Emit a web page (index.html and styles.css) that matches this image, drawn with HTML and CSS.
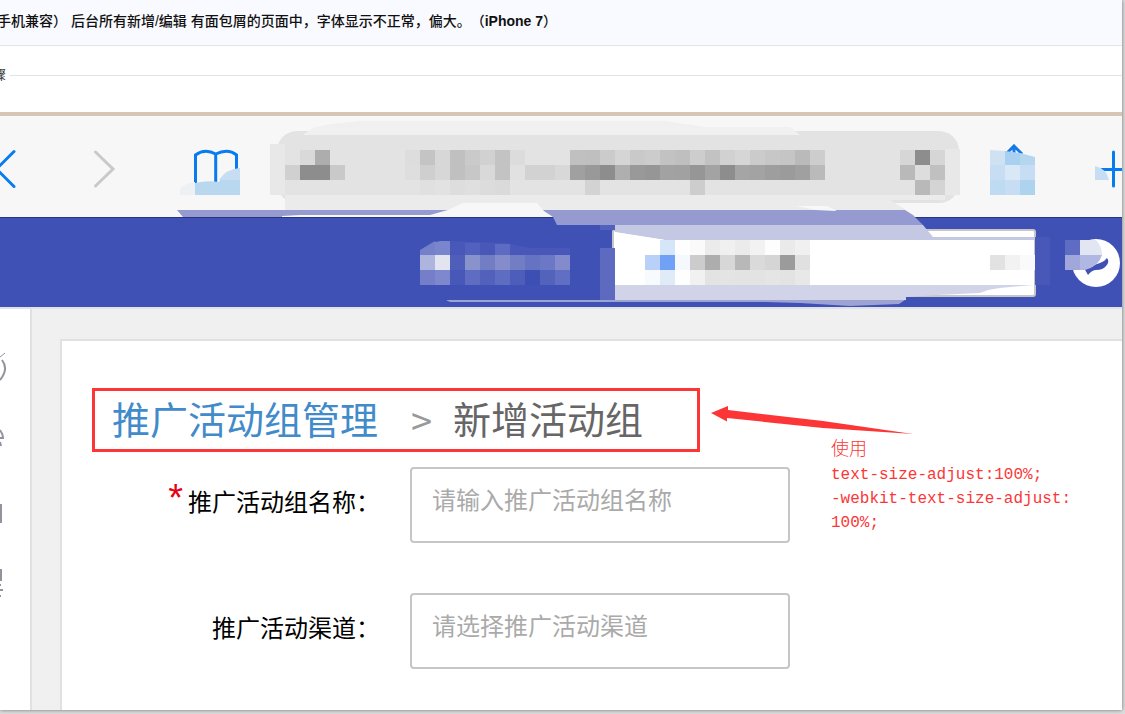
FILE: index.html
```html
<!DOCTYPE html>
<html lang="zh-CN">
<head>
<meta charset="utf-8">
<title>后台所有新增/编辑</title>
<link rel="stylesheet" href="styles.css">
</head>
<body>
<main class="sheet">
  <h1 class="issue-title">手机兼容） 后台所有新增/编辑 有面包屑的页面中，字体显示不正常，偏大。（<strong>iPhone 7</strong>）</h1>
  <div class="legend"><span class="legend-text">骤</span><span class="legend-line"></span></div>

  <section class="phone">
    <div class="toolbar">
      <button class="icon-button" aria-label="后退"><svg width="16" height="40" viewBox="0 0 16 40"><path d="M14 2.500-3.500 20 14 37.500" fill="none" stroke="#077bf0" stroke-width="3" stroke-linecap="round"/></svg></button>
      <button class="icon-button" aria-label="前进"><svg width="23" height="40" viewBox="0 0 23 40"><path d="M2.500 3 20 20 2.500 37" fill="none" stroke="#c9c9c9" stroke-width="3" stroke-linecap="round"/></svg></button>
      <button class="icon-button" aria-label="书签"><svg width="46" height="40" viewBox="0 0 46 40"><path d="M2.500 36V6Q12-1 22.700 5Q35-1 43.500 6V36M22.700 5V36" fill="none" stroke="#077bf0" stroke-width="3"/></svg></button>
      <input class="address" type="text" aria-label="地址">
      <button class="icon-button" aria-label="分享"><svg width="20" height="50" viewBox="0 0 20 50"><path d="M2 10 10 2 18 10M10 2V30" fill="none" stroke="#147ae8" stroke-width="3"/></svg></button>
      <button class="icon-button" aria-label="新建"><svg width="21" height="40" viewBox="0 0 21 40"><path d="M1 20.500H21M12.500 3V37" fill="none" stroke="#077bf0" stroke-width="3" stroke-linecap="round"/></svg></button>
    </div>
    <div class="app-bar">
      <input class="search" type="text" aria-label="搜索">
      <button class="icon-button" aria-label="用户"><svg width="48" height="48" viewBox="0 0 48 48"><circle cx="24" cy="24" r="24" fill="#fff"/><path d="M12 29 16 36Q20 31 24 31Q31 31 34 27Q38 23 35 19Q32 23 28 24Q23 25 20 28Z" fill="#3f51b5"/></svg></button>
    </div>
    <svg class="mosaic" width="1122" height="192" viewBox="0 116 1122 192" aria-hidden="true">
      <path fill="#f0f0f0" d="M303 135 313 128 330 124 360 121H665L705 127H790L800 135Z"/>
      <path fill="#ebebeb" d="M285 195H945V200H890L906 210H285Z"/>
      <path fill="#e8e8e8" d="M270 144H285V195H270ZM945 149H960V195H945Z"/>
      <path fill="#edf1f4" d="M180 195V189Q187 182 195 182V195Z"/>
      <path fill="#b9d8f0" d="M195 183Q207 180 219 182Q225 170 240 168V195H195Z"/>
      <path fill="#c6ddf3" d="M219 180Q226 169 240 168V180ZM1095 166Q1106 168 1109 180H1095Z"/>
      <path fill="#cfe2f2" d="M990 150 1005 151V165H990Z"/>
      <path fill="#a9d0f0" d="M1005 151 1020 153V165H1005Z"/>
      <path fill="#b5d6ef" d="M1020 153 1035 157V165H1020Z"/>
      <path fill="#959bd1" d="M177 210H905L913 215 923 225H557L553 217H183Z"/>
      <path fill="#f7f7f7" d="M282 217V216L300 215H430L448 210 463 203H537L544 211 553 217ZM796 206H827L837 211 815 210Z"/>
      <path fill="#c4c8e3" d="M615 225H923L933 237H1035V240H665L615 232Z"/>
      <path fill="#fff" d="M614 232 665 240 659 248H614Z"/>
      <path fill="#5261bc" d="M600 225H615V230H600Z"/>
      <path fill="#5e6abf" d="M600 248H615V300H600Z"/>
      <path fill="#d1d4e8" d="M615 285H1033L1000 288 988 290 980 293 937 295 906 297V300H615Z"/>
      <path fill="#9da3d2" d="M446 300H905L899 304 850 306 800 303 765 302H450Z"/>
      <path fill="#7580ca" d="M420 250 435 241V255H420Z"/>
      <path fill="#7985cc" d="M435 242 441 241H450V255H435Z"/>
      <path fill="#4857b8" d="M450 241 505 243 530 248H570V255H450Z"/>
      <path fill="#5f6cc3" d="M1065 240H1080V255H1065Z"/>
      <path fill="#e2e5f2" d="M1080 240H1096Q1102 246 1102 255H1080Z"/>
      <path fill="#a1a7da" d="M1065 255H1080V270H1065Z"/>
      <path fill="#b0b7e2" d="M1080 255H1102Q1099 266 1085 270H1080Z"/>
      <path fill="#4858b9" d="M1035 237H1050V285H1035Z"/>
      <g id="cells"></g>
    </svg>
  </section>

  <div class="workspace">
    <nav class="sidebar" aria-label="菜单">
      <svg width="8" height="250" viewBox="0 350 8 250" fill="none" stroke="#92939c" stroke-width="2"><path d="M0 357 5 353" stroke-width="1"/><path d="M2 360Q9 369 0 380M0 430Q3 434 3 438H0M0 442 1 446"/><path d="M0 505H1V522H0M1 569V581M0 585H1M0 590H3M0 596H1"/></svg>
    </nav>
    <section class="card">
      <nav class="breadcrumb" aria-label="面包屑"><a class="crumb-link" href="#">推广活动组管理</a><span class="crumb-sep">&gt;</span><span>新增活动组</span></nav>
      <form class="form">
        <label class="label" for="name"><span class="required">*</span>推广活动组名称：</label>
        <input class="field" id="name" type="text" placeholder="请输入推广活动组名称">
        <label class="label" for="channel">推广活动渠道：</label>
        <select class="field" id="channel"><option>请选择推广活动渠道</option></select>
      </form>
      <svg class="arrow" width="202" height="30" viewBox="0 0 202 30" aria-hidden="true"><path d="M0 7 17 0V4L112 15 202 28 112 22 16 12V15.500Z" fill="#fc3637"/></svg>
      <p class="note"><span class="note-cjk">使用</span><br>text-size-adjust:100%;<br>-webkit-text-size-adjust:<br>100%;</p>
    </section>
  </div>
</main>
<script src="mosaic.js"></script>
</body>
</html>
```
FILE: styles.css
```css
* { box-sizing: border-box; }
body {
  margin: 0;
  min-height: 100vh;
  padding: 0 3px 4px 0;
  background: #dedede;
  font-family: "Liberation Sans", "Noto Sans CJK SC", sans-serif;
  overflow: hidden;
}
.sheet {
  display: flex;
  flex-direction: column;
  min-height: calc(100vh - 4px);
  background: #fff;
  box-shadow: 0 0 4px rgba(0, 0, 0, .5);
}
.issue-title {
  height: 46px;
  margin: 0;
  text-indent: -3px;
  border-bottom: 1px solid #e3e3e3;
  background: #f9faff;
  color: #111;
  font-size: 14px;
  font-weight: 500;
  line-height: 42px;
  white-space: nowrap;
  text-spacing-trim: space-all;
}
.legend {
  display: flex;
  align-items: center;
  gap: 4px;
  height: 66px;
  padding-bottom: 7px;
}
.legend-text {
  display: flex;
  justify-content: flex-end;
  width: 6px;
  padding-bottom: 4px;
  font-size: 13px;
  color: #333;
}
.legend-line { flex: 1; height: 1px; background: #e3e3e3; }
.phone { position: relative; border-top: 4px solid #d7c6b3; }
.toolbar {
  display: flex;
  align-items: center;
  height: 102px;
  gap: 77px;
  padding-top: 5px;
  background: #f7f7f7;
  border-bottom: 1px solid #28367f;
}
.icon-button {
  flex: none;
  padding: 0;
  border: 0;
  background: none;
  line-height: 0;
}
.address {
  flex: 1;
  min-width: 0;
  height: 72px;
  margin: 0 -32px 4px -39px;
  border: 0;
  border-radius: 20px;
  background: #e3e3e3;
}
.app-bar {
  display: flex;
  align-items: center;
  justify-content: flex-end;
  gap: 36px;
  height: 91px;
  padding-right: 2px;
  background: #3f51b5;
  border-bottom: 2px solid #dfe2e6;
}
.search {
  width: 424px;
  height: 68px;
  border: 2px solid #c6c6c8;
  border-radius: 3px;
  background: #fff;
}
.mosaic { position: absolute; left: 0; top: 0; }
.workspace { flex: 1; display: flex; background: #f0f0f0; }
.sidebar {
  width: 32px;
  padding-top: 41px;
  background: #fff;
  border-right: 2px solid #e1e1e1;
}
.card {
  position: relative;
  flex: 1;
  margin: 30px 0 0 28px;
  padding: 47px 30px 40px;
  border: solid #e1e1e1;
  border-width: 2px 0 0 2px;
  background: #fff;
}
.breadcrumb {
  display: flex;
  align-items: flex-start;
  width: 608px;
  height: 64px;
  padding: 0 17px;
  border: 3px solid #fc3637;
  color: #666;
  font-family: "Noto Sans CJK SC", sans-serif;
  font-size: 38px;
  font-weight: 400;
  line-height: 54px;
}
.crumb-link { color: #428bca; text-decoration: none; }
.crumb-sep { width: 75px; padding-left: 12px; text-align: center; color: #999; line-height: 58px; }
.form {
  display: grid;
  grid-template-columns: 288px 380px;
  gap: 50px 30px;
  margin-top: 15px;
}
.label {
  align-self: center;
  padding-bottom: 8px;
  text-align: right;
  font-family: "Noto Sans CJK SC", sans-serif;
  font-size: 24px;
  font-weight: 400;
  line-height: 36px;
  color: #000;
}
.required {
  margin-right: 5px;
  color: #e60012;
  font-family: "Liberation Sans", sans-serif;
  font-size: 38px;
  line-height: 24px;
}
.field {
  width: 100%;
  height: 76px;
  padding: 0 20px 14px;
  border: 2px solid #c6c6c6;
  border-radius: 4px;
  background: #fff;
  appearance: none;
  font-family: "Noto Sans CJK SC", sans-serif;
  font-size: 24px;
  font-weight: 400;
  color: #aaa;
}
.field::placeholder { color: #aaa; opacity: 1; }
.arrow { position: absolute; left: 649px; top: 65px; }
.note {
  position: absolute;
  left: 769px;
  top: 97px;
  margin: 0;
  color: #fc3637;
  font-family: "Liberation Mono", "Noto Sans CJK SC", monospace;
  font-size: 16px;
  line-height: 24px;
  white-space: nowrap;
}
.note-cjk { font-size: 18px; font-weight: 300; }
```
FILE: mosaic.js
```js
// Each entry: x, y of the first 15px cell, then the fill of each cell in the row.
const rows = [
  [300, 150, "d9d9d9 adadad"],
  [285, 165, "d0d0d0 8d8d8d 8d8d8d c9c9c9"],
  [405, 150, "dddddd c4c4c4 d7d7d7 c0c0c0 cacaca d1d1d1 c3c3c3 dcdcdc"],
  [405, 165, "dedede cfcfcf d7d7d7 c0c0c0 c7c7c7 d9d9d9 c3c3c3 e1e1e1 d2d2d2 d2d2d2 d8d8d8"],
  [420, 180, "e0e0e0 e2e2e2 dddddd dfdfdf dcdcdc dadada"],
  [570, 150, "c0c0c0 bfbfbf cbcbcb d5d5d5 c9c9c9 cccccc c2c2c2 bfbfbf cdcdcd c2c2c2 d1d1d1 d6d6d6 cbcbcb c7c7c7 c5c5c5 bababa cdcdcd"],
  [570, 165, "a0a0a0 999999 8d8d8d afafaf 999999 969696 a2a2a2 a1a1a1 969696 a3a3a3 8d8d8d a5a5a5 a3a3a3 9e9e9e 9b9b9b a0a0a0 bababa"],
  [585, 180, "d3d3d3"],
  [690, 180, "cdcdcd"],
  [900, 150, "d6d6d6 8d8d8d d6d6d6"],
  [900, 165, "b9b9b9 dddddd c0c0c0"],
  [915, 180, "b9b9b9 d4d4d4"],
  [990, 165, "c6ddf3 d8e8f6 c6ddf3"],
  [990, 180, "bfdbf1 c6ddf3 aed3ef"],
  [420, 255, "adb5de e2e5f0 4f5fb9 8993cb 727ec4 848ccb 727ec4 6673c3 6a78c5 838bcc"],
  [420, 270, "757fc9 7d89cc 4858b9 5e6cc1 5261bc 5e6cc1 4d5dba 3e4fb4 5363bc 606ec3"],
  [660, 240, "d6e6f9 fefefe fafafa ebebeb f0f0f0 ebebeb f2f2f2 fdfdfd eaeaea f0f0f0"],
  [645, 255, "b9d1f8 70a1f6 f5f9fd cccccc adadad d7d7d7 b8b8b8 dadada d5d5d5 9b9b9b e0e0e0"],
  [645, 270, "f8fbfd dfebf7 fefefe f1f1f1 e3e3e3 e4e4e4 e3e3e3 e3e3e3 e5e5e5 e3e3e3 e8e8e8"],
  [990, 255, "e2e2e2 f2f2f2 fafafa"],
  [495, 244, "5d6bc2", 11],
  [465, 243, "5261bd", 12]
];
const cells = document.getElementById("cells");
for (const [x, y, fills, height = 15] of rows) {
  fills.split(" ").forEach((fill, i) => {
    const rect = document.createElementNS("http://www.w3.org/2000/svg", "rect");
    rect.setAttribute("x", x + i * 15);
    rect.setAttribute("y", y);
    rect.setAttribute("width", 15);
    rect.setAttribute("height", height);
    rect.setAttribute("fill", "#" + fill);
    rect.setAttribute("shape-rendering", "crispEdges");
    cells.appendChild(rect);
  });
}
```
